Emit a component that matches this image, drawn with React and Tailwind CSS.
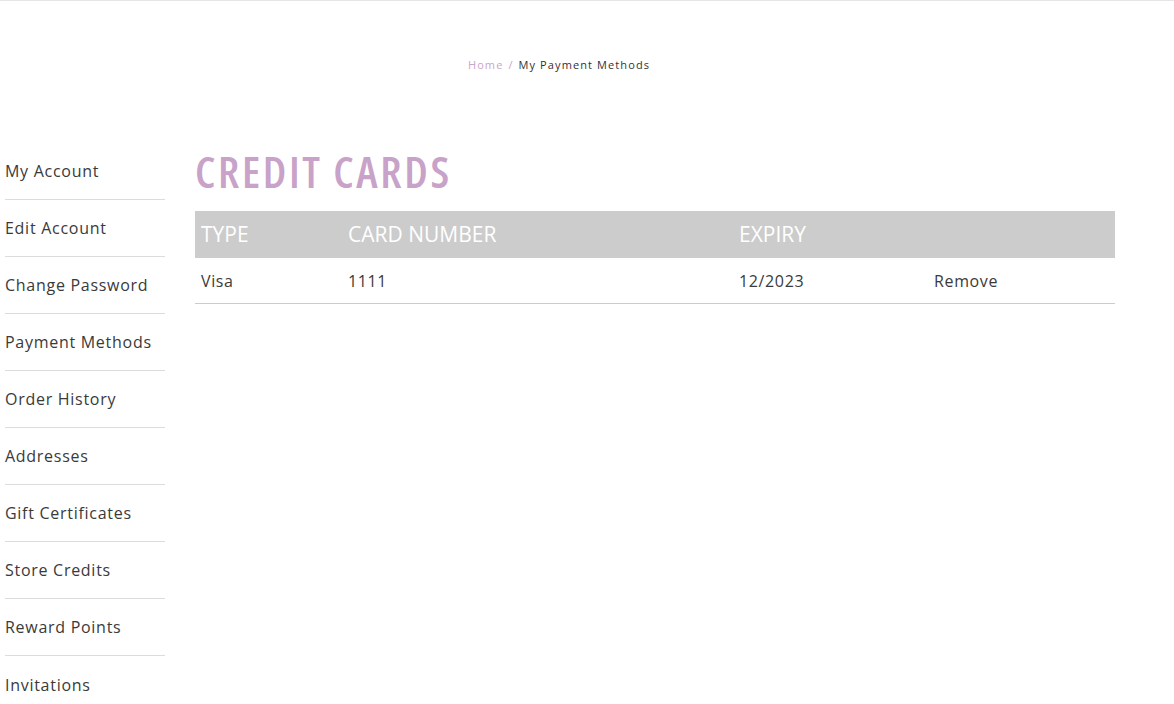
import React from 'react';

const links = [
  'My Account',
  'Edit Account',
  'Change Password',
  'Payment Methods',
  'Order History',
  'Addresses',
  'Gift Certificates',
  'Store Credits',
  'Reward Points',
  'Invitations',
];

const cards = [{ type: 'Visa', number: '1111', expiry: '12/2023' }];

export default function App() {
  return (
    <div className="min-h-[704px] bg-white border-t border-[#e5e5e5] font-['Open_Sans',sans-serif] text-[#3a3a3a]">
      {/* Breadcrumb */}
      <div className="pt-[56px] pb-[53px] pr-[56px] flex justify-center text-[11px] tracking-[0.1em] leading-[16px]">
        <span className="text-[#c9a5c9]">Home</span>
        <span className="text-[#c9a5c9] mx-[5px]">/</span>
        <span className="text-[#333]">My Payment Methods</span>
      </div>

      <div className="flex">
        {/* Sidebar */}
        <ul className="w-[160px] ml-[5px] mt-[17px]">
          {links.map((label, i) => (
            <li
              key={label}
              className={`h-[57px] flex items-center text-[16px] tracking-[0.045em] text-[#3a3a3a] ${
                i < links.length - 1 ? 'border-b border-[#dcdcdc]' : ''
              }`}
            >
              {label}
            </li>
          ))}
        </ul>

        {/* Content */}
        <div className="ml-[30px] w-[920px]">
          <h1 className="text-[44px] leading-[58px] font-semibold tracking-[0.06em] text-[#c8a2c8] [font-stretch:condensed] mt-[16px] mb-[11px]">
            CREDIT CARDS
          </h1>
          <table className="w-full border-collapse">
            <thead>
              <tr className="bg-[#cccccc] h-[47px] text-white text-[21px] text-left">
                <th className="w-[147px] pl-[6px] font-normal">TYPE</th>
                <th className="w-[391px] pl-[6px] font-normal">CARD NUMBER</th>
                <th className="w-[195px] pl-[6px] font-normal">EXPIRY</th>
                <th className="pl-[6px] font-normal"></th>
              </tr>
            </thead>
            <tbody>
              {cards.map((c) => (
                <tr key={c.number} className="h-[45px] border-b border-[#cccccc] text-[16px] tracking-[0.04em] text-[#3a3a3a]">
                  <td className="pl-[6px] pt-[2px]">{c.type}</td>
                  <td className="pl-[6px] pt-[2px]">{c.number}</td>
                  <td className="pl-[6px] pt-[2px]">{c.expiry}</td>
                  <td className="pl-[6px] pt-[2px]">Remove</td>
                </tr>
              ))}
            </tbody>
          </table>
        </div>
      </div>
    </div>
  );
}
